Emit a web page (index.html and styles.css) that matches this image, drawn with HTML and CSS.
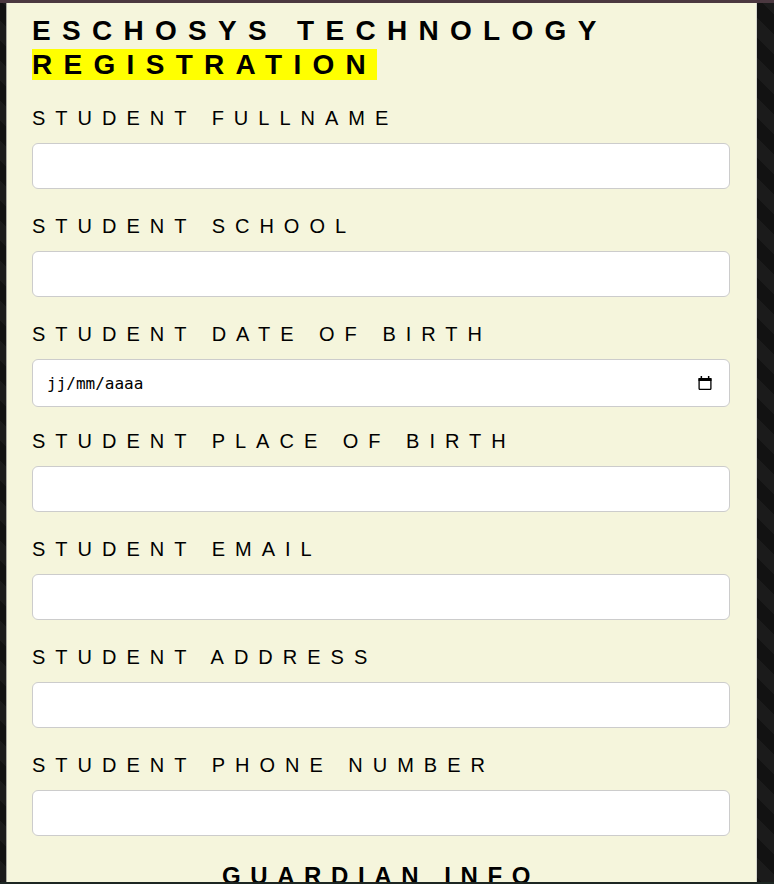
FILE: index.html
```html
<!DOCTYPE html>
<html lang="fr">
<head>
<meta charset="utf-8">
<title>Eschosys Technology Registration</title>
<link rel="stylesheet" href="styles.css">
</head>
<body>
<div class="topbar"></div>
<main class="page">
  <section class="panel">
    <h1 class="title">ESCHOSYS TECHNOLOGY<br><span class="hl">REGISTRATION</span></h1>
    <form class="form">
      <div class="field">
        <label class="label" for="fullname">STUDENT FULLNAME</label>
        <input class="input" id="fullname" type="text">
      </div>
      <div class="field">
        <label class="label" for="school">STUDENT SCHOOL</label>
        <input class="input" id="school" type="text">
      </div>
      <div class="field field-date">
        <label class="label" for="dob">STUDENT DATE OF BIRTH</label>
        <div class="date-box">
          <input class="date-text" id="dob" type="text" placeholder="jj/mm/aaaa">
          <svg class="cal-icon" width="14" height="14" viewBox="0 0 14 14" aria-hidden="true">
            <rect x="1.1" y="2.6" width="11.8" height="10.8" rx="0.8" fill="none" stroke="#000" stroke-width="1.3"/>
            <rect x="0.5" y="2" width="13" height="3" fill="#000"/>
            <rect x="2.6" y="0" width="1.5" height="3" fill="#000"/>
            <rect x="9.9" y="0" width="1.5" height="3" fill="#000"/>
          </svg>
        </div>
      </div>
      <div class="field">
        <label class="label" for="pob">STUDENT PLACE OF BIRTH</label>
        <input class="input" id="pob" type="text">
      </div>
      <div class="field">
        <label class="label" for="email">STUDENT EMAIL</label>
        <input class="input" id="email" type="email">
      </div>
      <div class="field">
        <label class="label" for="address">STUDENT ADDRESS</label>
        <input class="input" id="address" type="text">
      </div>
      <div class="field">
        <label class="label" for="phone">STUDENT PHONE NUMBER</label>
        <input class="input" id="phone" type="tel">
      </div>
      <h2 class="section-title">GUARDIAN INFO</h2>
    </form>
  </section>
</main>
<div class="bottombar"></div>
</body>
</html>
```
FILE: styles.css
```css
html, body {
  margin: 0;
  padding: 0;
}

body {
  background-color: #121212;
  background-image: linear-gradient(45deg, #1b1b1b 25%, transparent 25%, transparent 50%, #1b1b1b 50%, #1b1b1b 75%, transparent 75%);
  background-size: 40px 40px;
  font-family: "Liberation Sans", Arial, sans-serif;
  color: #000;
  overflow: hidden;
  height: 884px;
}

.topbar {
  height: 3px;
  background: #4b3840;
}

.page {
  display: flex;
  padding-left: 6px;
}

.panel {
  width: 751px;
  box-sizing: border-box;
  background: beige;
  border-left: 1px solid #a9a9a0;
  border-right: 1px solid #d4d4cc;
  padding: 11px 26px 40px 25px;
}

.title {
  margin: 0;
  font-size: 28px;
  line-height: 34px;
  font-weight: 700;
  letter-spacing: 11.3px;
}

.hl {
  background: #ffff00;
}

.form {
  margin-top: 25px;
  display: flex;
  flex-direction: column;
}

.field {
  display: flex;
  flex-direction: column;
  margin-bottom: 26px;
}

.field-date {
  margin-bottom: 23px;
}

.label {
  font-size: 20px;
  line-height: 23px;
  letter-spacing: 10px;
  margin-bottom: 13px;
}

.input {
  height: 46px;
  box-sizing: border-box;
  border: 1px solid #cccccc;
  border-radius: 6px;
  background: #fff;
  font: 16px "DejaVu Sans Mono", monospace;
  padding: 0 12px;
  outline: none;
}

.date-box {
  display: flex;
  align-items: center;
  height: 48px;
  box-sizing: border-box;
  border: 1px solid #cccccc;
  border-radius: 6px;
  background: #fff;
  padding: 0 17px 0 14px;
}

.date-text {
  flex: 1;
  min-width: 0;
  border: none;
  outline: none;
  background: transparent;
  padding: 0;
  font: 16px "DejaVu Sans Mono", monospace;
  color: #000;
}

.date-text::placeholder {
  color: #000;
  opacity: 1;
}

.cal-icon {
  flex: none;
  display: block;
}

.section-title {
  margin: 0;
  text-align: center;
  font-size: 24px;
  font-weight: 700;
  letter-spacing: 0.4em;
}

.bottombar {
  position: fixed;
  left: 0;
  right: 0;
  bottom: 0;
  height: 2px;
  background: #1d2622;
}
```
